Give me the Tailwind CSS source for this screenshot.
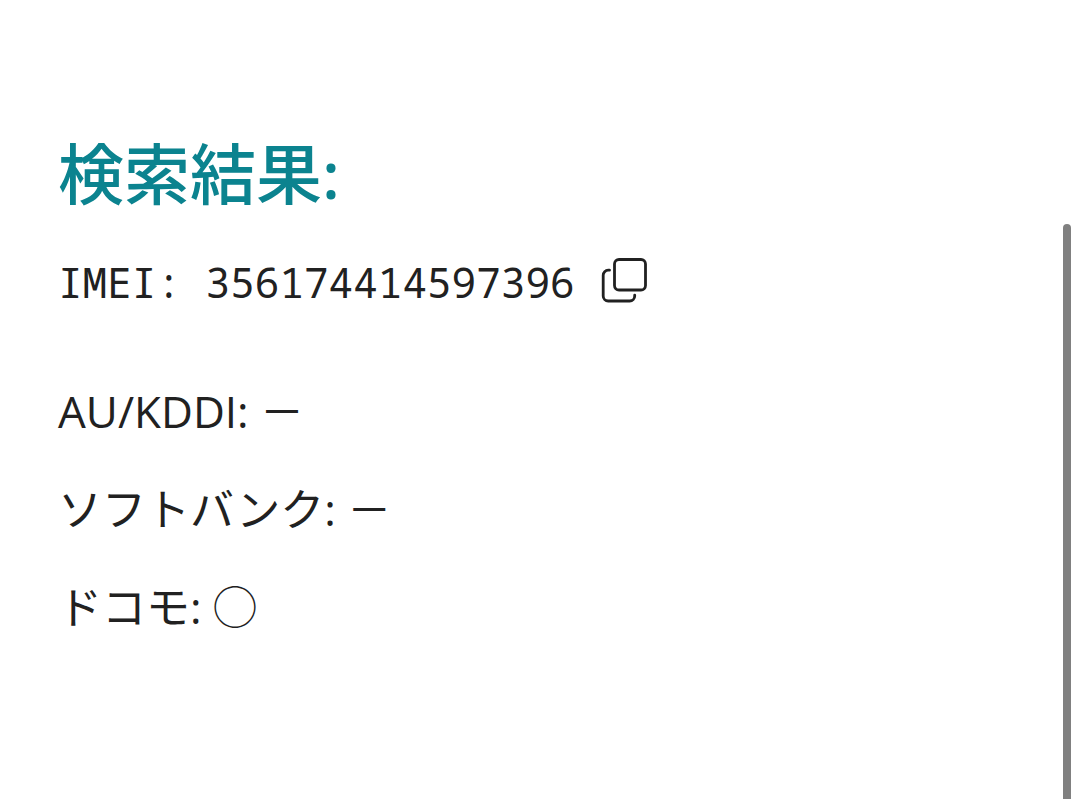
<!doctype html>
<html lang="ja">
<head>
    <meta charset="UTF-8" />
    <meta name="viewport" content="width=device-width, initial-scale=1.0" />
    <title>検索結果</title>
    <script src="https://cdn.jsdelivr.net/npm/@tailwindcss/browser@4"></script>
</head>

<body class="relative min-h-screen overflow-hidden bg-white text-[#212121] font-['Open_Sans','Noto_Sans_CJK_JP',sans-serif]">
    <main class="px-[58px] pt-[125px]">
        <h1 class="text-[66px] leading-[96px] font-medium text-[#0b838f] font-['Noto_Sans','Noto_Sans_CJK_JP',sans-serif]">検索結果:</h1>

        <div class="mt-7 flex items-start gap-6">
            <p class="text-[41px] leading-[66px] font-['Noto_Sans_Mono','DejaVu_Sans_Mono',monospace]">IMEI: 356174414597396</p>
            <button type="button" class="mt-2" aria-label="IMEIをコピー">
                <svg class="h-[46px] w-[48px]" viewBox="0 0 48 46" fill="none" stroke="currentColor" stroke-width="2.8" stroke-linecap="round">
                    <rect x="15.5" y="2.5" width="31" height="30.5" rx="4.5" />
                    <path d="M10.5 13.2H9.2a5 5 0 0 0-5 5V39a5 5 0 0 0 5 5h21.5a5 5 0 0 0 5-5v-.8" />
                </svg>
            </button>
        </div>

        <div class="mt-[66px] flex flex-col gap-[38px] text-[44px] leading-[60px]">
            <p>AU/KDDI: －</p>
            <p>ソフトバンク: －</p>
            <p>ドコモ: ◯</p>
        </div>
    </main>

    <!-- Scroll indicator -->
    <div class="absolute top-[224px] right-[9px] -bottom-2 w-2 rounded-full bg-[#808080]"></div>
</body>
</html>
